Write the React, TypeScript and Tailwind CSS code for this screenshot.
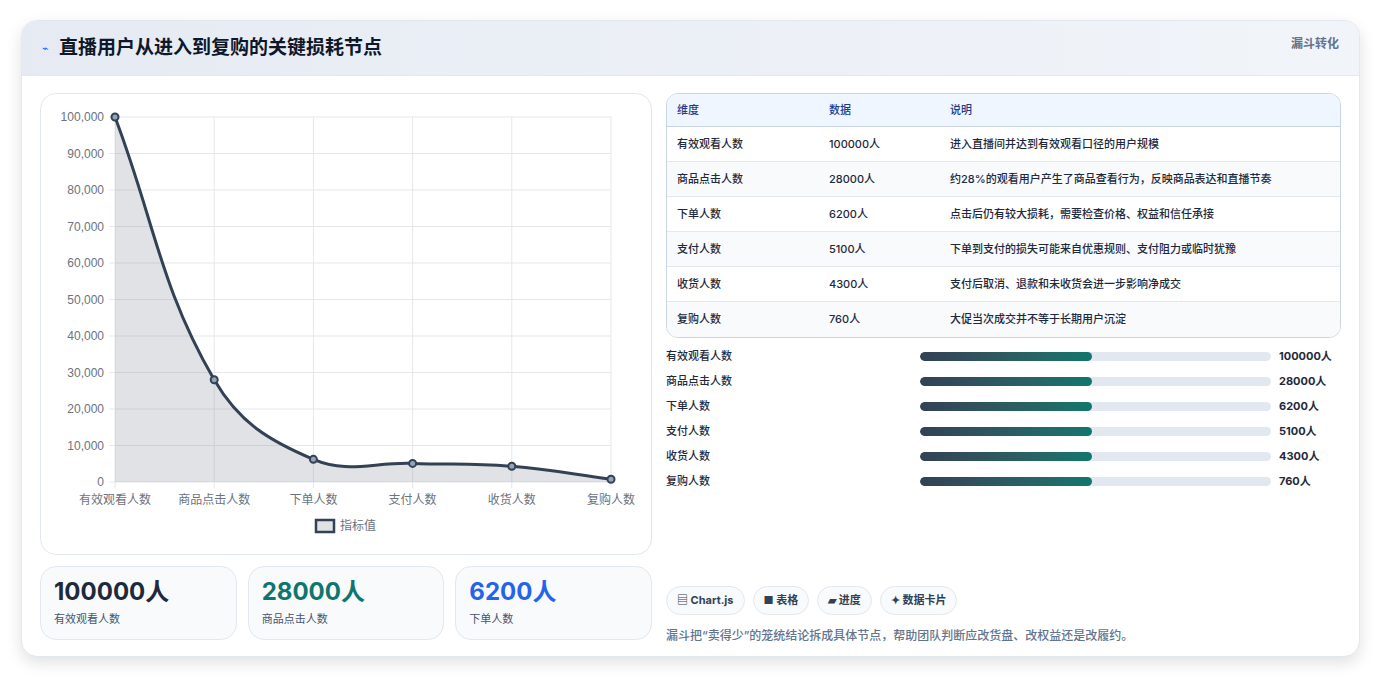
import React from "react";

const labels = ["有效观看人数", "商品点击人数", "下单人数", "支付人数", "收货人数", "复购人数"];
const vals = [100000, 28000, 6200, 5100, 4300, 760];
const desc = [
  "进入直播间并达到有效观看口径的用户规模",
  "约28%的观看用户产生了商品查看行为，反映商品表达和直播节奏",
  "点击后仍有较大损耗，需要检查价格、权益和信任承接",
  "下单到支付的损失可能来自优惠规则、支付阻力或临时犹豫",
  "支付后取消、退款和未收货会进一步影响净成交",
  "大促当次成交并不等于长期用户沉淀",
];

const X0 = 74, X1 = 570, Y0 = 23, Y1 = 388;
function pts() {
  return vals.map((v, i) => ({ x: X0 + ((X1 - X0) * i) / 5, y: Y1 - ((Y1 - Y0) * v) / 100000 }));
}
function pathD() {
  const p = pts();
  const t = 0.4;
  let d = `M${p[0].x},${p[0].y}`;
  const cps = p.map((cur, i) => {
    const prev = p[i - 1] || cur, next = p[i + 1] || cur;
    const d01 = Math.hypot(cur.x - prev.x, cur.y - prev.y);
    const d12 = Math.hypot(next.x - cur.x, next.y - cur.y);
    let fa = d01 / (d01 + d12 || 1), fb = d12 / (d01 + d12 || 1);
    fa *= t; fb *= t;
    return {
      px: cur.x - fa * (next.x - prev.x), py: cur.y - fa * (next.y - prev.y),
      nx: cur.x + fb * (next.x - prev.x), ny: cur.y + fb * (next.y - prev.y),
    };
  });
  for (let i = 1; i < p.length; i++) {
    d += ` C${cps[i - 1].nx},${cps[i - 1].ny} ${cps[i].px},${cps[i].py} ${p[i].x},${p[i].y}`;
  }
  return d;
}

function Chart() {
  const p = pts();
  const d = pathD();
  return (
    <svg width="610" height="460" className="block">
      {Array.from({ length: 11 }).map((_, i) => {
        const y = Y0 + ((Y1 - Y0) * i) / 10;
        return (
          <g key={i}>
            <line x1={X0 - 6} x2={X1} y1={y} y2={y} stroke="#e5e7eb" />
            <text x={X0 - 11} y={y + 4} textAnchor="end" fontSize="12" fill="#6b7280" fontFamily="Liberation Sans, sans-serif">
              {(100000 - i * 10000).toLocaleString("en-US")}
            </text>
          </g>
        );
      })}
      {p.map((q, i) => (
        <g key={i}>
          <line x1={q.x} x2={q.x} y1={Y0} y2={Y1 + 6} stroke="#e5e7eb" />
          <text x={q.x} y={Y1 + 22} textAnchor="middle" fontSize="12" fill="#6b7280" fontFamily="Noto Sans CJK SC, sans-serif">{labels[i]}</text>
        </g>
      ))}
      <path d={`${d} L${X1},${Y1} L${X0},${Y1} Z`} fill="rgba(148,152,160,0.28)" />
      <path d={d} fill="none" stroke="#334155" strokeWidth="3" />
      {p.map((q, i) => (
        <circle key={i} cx={q.x} cy={q.y} r="3.5" fill="#94a3b8" stroke="#334155" strokeWidth="2" />
      ))}
      <rect x="275" y="426" width="18" height="12" fill="rgba(148,152,160,0.28)" stroke="#334155" strokeWidth="2.5" />
      <text x="299" y="436" fontSize="12" fill="#6b7280" fontFamily="Noto Sans CJK SC, sans-serif">指标值</text>
    </svg>
  );
}

export default function App() {
  return (
    <div className="min-h-[678px] bg-white pt-5 px-[21px]" style={{ fontFamily: "Inter, 'Noto Sans CJK SC', sans-serif" }}>
      <div className="w-[1339px] h-[637px] rounded-2xl border border-slate-200 bg-white shadow-[0_6px_16px_rgba(0,0,0,0.12)] overflow-hidden">
        <div className="h-[55px] flex items-center justify-between px-5 bg-gradient-to-r from-[#e6ebf3] to-[#f1f4f9] border-b border-slate-200">
          <div className="flex items-center gap-2.5">
            <span className="text-[11px] text-blue-600">⌁</span>
            <span className="text-[19px] font-bold text-[#0f172a]">直播用户从进入到复购的关键损耗节点</span>
          </div>
          <span className="text-[12px] font-bold text-slate-500 -mt-2">漏斗转化</span>
        </div>
        <div className="flex gap-[14px] px-[18px] pt-[17px]">
          <div className="w-[612px] flex flex-col gap-[11px]">
            <div className="h-[462px] rounded-2xl border border-slate-200 pt-0 overflow-hidden">
              <Chart />
            </div>
            <div className="grid grid-cols-3 gap-[11px]">
              {[["100000人", "text-[#1e293b]"], ["28000人", "text-[#0f766e]"], ["6200人", "text-[#2563eb]"]].map(([v, c], i) => (
                <div key={i} className="h-[74px] rounded-2xl border border-slate-200 bg-[#f8fafc] px-[13px] pt-[10px]">
                  <div className={`text-[24px] font-bold leading-[30px] ${c}`}>{v}</div>
                  <div className="text-[11px] text-slate-600 mt-1">{labels[i]}</div>
                </div>
              ))}
            </div>
          </div>
          <div className="flex-1 flex flex-col">
            <div className="rounded-xl border border-slate-300 overflow-hidden text-[11px] font-medium text-[#1e293b]">
              <div className="flex h-[33px] items-center bg-[#eff6ff] border-b border-slate-300 text-[#1e3a8a]">
                <div className="w-[162px] pl-[10px]">维度</div><div className="w-[121px]">数据</div><div>说明</div>
              </div>
              {labels.map((l, i) => (
                <div key={i} className={`flex h-[35px] items-center ${i % 2 ? "bg-[#f8fafc]" : "bg-white"} ${i < 5 ? "border-b border-slate-200" : ""}`}>
                  <div className="w-[162px] pl-[10px]">{l}</div><div className="w-[121px]">{vals[i]}人</div><div>{desc[i]}</div>
                </div>
              ))}
            </div>
            <div className="mt-[10px] flex flex-col gap-[9px]">
              {labels.map((l, i) => (
                <div key={i} className="flex items-center h-4 text-[11px] font-medium text-[#1e293b]">
                  <div className="w-[254px]">{l}</div>
                  <div className="w-[351px] h-[9px] rounded-full bg-[#e2e8f0] overflow-hidden">
                    <div className="h-full w-[49%] rounded-full bg-gradient-to-r from-[#334155] to-[#0f766e]" />
                  </div>
                  <div className="ml-2 font-bold">{vals[i]}人</div>
                </div>
              ))}
            </div>
            <div className="mt-[97px] flex gap-[8px]">
              {["▤ Chart.js", "■ 表格", "▰ 进度", "✦ 数据卡片"].map((c) => (
                <span key={c} className="h-[29px] px-[10px] flex items-center rounded-full border border-slate-200 bg-[#f8fafc] text-[11px] font-bold text-[#334155]">{c}</span>
              ))}
            </div>
            <div className="mt-[12px] text-[12px] font-medium text-slate-500">漏斗把“卖得少”的笼统结论拆成具体节点，帮助团队判断应改货盘、改权益还是改履约。</div>
          </div>
        </div>
      </div>
    </div>
  );
}
